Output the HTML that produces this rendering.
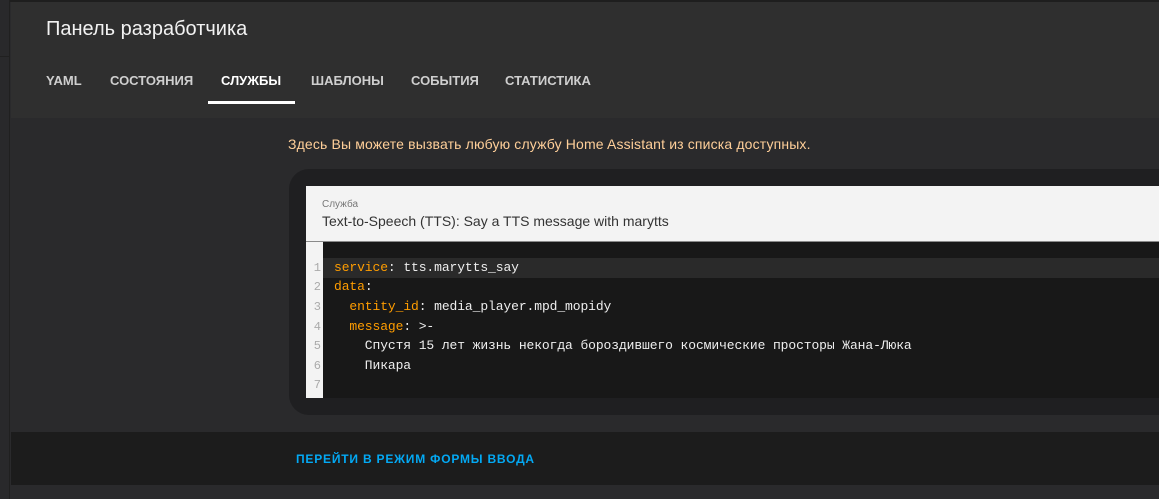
<!DOCTYPE html>
<html><head><meta charset="utf-8"><style>
*{margin:0;padding:0;box-sizing:border-box}
body{width:1159px;height:499px;overflow:hidden;background:#2a2a2c;font-family:"Liberation Sans",sans-serif;position:relative}
.strip{position:absolute;left:0;top:0;width:10px;height:499px;background:#29292b;border-right:1px solid #202020}
.strip2{position:absolute;left:0;top:56px;width:10px;height:1px;background:#202020}
.top{position:absolute;left:0;top:0;width:1159px;height:2px;background:#1e1e1e}
.header{position:absolute;left:11px;top:2px;right:0;height:116px;background:#2f2f2f}
.title{position:absolute;left:46px;top:18px;color:#f2f2f2;font-size:20px}
.tab{position:absolute;top:73px;color:#cfcfcf;font-size:13px;font-weight:bold}
.ul{position:absolute;left:208px;top:101px;width:87px;height:3px;background:#fff}
.desc{position:absolute;left:288px;top:136px;color:#ffcf99;font-size:14px;letter-spacing:0.15px}
.card{position:absolute;left:289px;top:169px;width:900px;height:246px;background:#1f1f21;border-radius:20px}
.field{position:absolute;left:306px;top:186px;width:860px;height:56px;background:#f3f3f3;border-bottom:1px solid #8a8a8a}
.lbl{position:absolute;left:16px;top:13px;font-size:10px;color:#777}
.val{position:absolute;left:16px;top:27px;font-size:14px;color:#333}
.code{position:absolute;left:306px;top:242px;width:860px;height:156px;background:#181818}
.gut{position:absolute;left:0;top:0;width:17px;height:156px;background:#f3f3f3}
.act{position:absolute;left:17px;top:16px;right:0;height:20px;background:#2a2a2a}
.ln{position:absolute;left:0;width:15px;text-align:right;font:12px "Liberation Mono",monospace;color:#aaa}
.cl{position:absolute;left:28px;font:13px "Liberation Mono",monospace;color:#eee;white-space:pre;letter-spacing:-0.1px}
.k{color:#ff9d00}
.bar{position:absolute;left:11px;top:432px;right:0;height:53px;background:#1c1c1c}
.btn{position:absolute;left:296px;top:452px;color:#03a9f4;font-size:12px;font-weight:bold;letter-spacing:0.8px}
</style></head><body>
<div class="top"></div>
<div class="header"></div>
<div class="strip"></div><div class="strip2"></div>
<div class="title">Панель разработчика</div>
<div class="tab" style="left:46px">YAML</div>
<div class="tab" style="left:110px">СОСТОЯНИЯ</div>
<div class="tab" style="left:221px;color:#fff">СЛУЖБЫ</div>
<div class="tab" style="left:311px">ШАБЛОНЫ</div>
<div class="tab" style="left:411px">СОБЫТИЯ</div>
<div class="tab" style="left:505px">СТАТИСТИКА</div>
<div class="ul"></div>
<div class="desc">Здесь Вы можете вызвать любую службу Home Assistant из списка доступных.</div>
<div class="card"></div>
<div class="field"><div class="lbl">Служба</div><div class="val">Text-to-Speech (TTS): Say a TTS message with marytts</div></div>
<div class="code">
<div class="gut"></div><div class="act"></div>
<div class="ln" style="top:19px">1</div><div class="ln" style="top:38px">2</div><div class="ln" style="top:58px">3</div><div class="ln" style="top:78px">4</div><div class="ln" style="top:97px">5</div><div class="ln" style="top:117px">6</div><div class="ln" style="top:136px">7</div>
<div class="cl" style="top:18px"><span class="k">service</span>: tts.marytts_say</div>
<div class="cl" style="top:37px"><span class="k">data</span>:</div>
<div class="cl" style="top:57px">  <span class="k">entity_id</span>: media_player.mpd_mopidy</div>
<div class="cl" style="top:77px">  <span class="k">message</span>: &gt;-</div>
<div class="cl" style="top:96px">    Спустя 15 лет жизнь некогда бороздившего космические просторы Жана-Люка</div>
<div class="cl" style="top:116px">    Пикара</div>
</div>
<div class="bar"></div>
<div class="btn">ПЕРЕЙТИ В РЕЖИМ ФОРМЫ ВВОДА</div>
</body></html>
